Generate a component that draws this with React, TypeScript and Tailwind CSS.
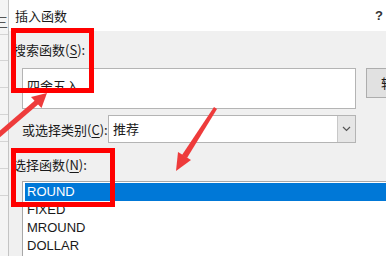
import React from "react";

const cjk = "font-['Noto_Sans_CJK_SC','Microsoft_YaHei',sans-serif]";
const latin = "font-['Liberation_Sans',Arial,sans-serif]";

const functions = ["ROUND", "FIXED", "MROUND", "DOLLAR", "TEXT"];

const Arrows: React.FC = () => (
  <svg
    className="pointer-events-none absolute inset-0"
    width={386}
    height={256}
    viewBox="0 0 386 256"
  >
    {/* arrow towards the search box */}
    <line x1={-6} y1={139} x2={37} y2={102} stroke="#ee3b3b" strokeWidth={5} />
    <polygon points="47,93 41.5,108 31,97" fill="#ee3b3b" />
    {/* arrow towards the function list */}
    <polygon points="214,107 217,109 187,158 182,155" fill="#ee3b3b" />
    <polygon points="176,171 191,160 178,152" fill="#ee3b3b" />
  </svg>
);

const Label: React.FC<{ text: string; hot: string }> = ({ text, hot }) => (
  <span className={`${cjk} text-[13px] leading-[16px] text-[#1a1a1a] whitespace-nowrap`}>
    {text}(<span className="underline underline-offset-2">{hot}</span>):
  </span>
);

export default function App() {
  return (
    <div className="relative flex h-[256px] w-[386px] overflow-hidden bg-[#f0f0f0]">
      {/* sheet behind the dialog */}
      <div className="flex w-[9px] shrink-0 flex-col border-r border-[#c4c4c4] bg-[#f4f4f4]">
        <div className={`${cjk} -ml-[5px] mt-[14px] h-[20px] text-[13px] leading-[16px] text-[#555]`}>三</div>
        <div className="h-[26px] border-t border-[#d4d4d4]" />
        <div className="h-[27px] border-t border-[#d4d4d4]" />
        <div className="h-[27px] border-t border-[#d4d4d4]" />
        <div className="h-[27px] border-t border-[#d4d4d4]" />
        <div className="h-[27px] border-t border-[#d4d4d4]" />
        <div className="h-[27px] border-t border-[#d4d4d4]" />
        <div className="h-[27px] border-t border-[#d4d4d4]" />
      </div>

      {/* dialog */}
      <div className="flex min-w-0 flex-1 flex-col">
        <div className="flex h-[31px] shrink-0 items-center justify-between bg-white pl-[6px] pr-[3px]">
          <span className={`${cjk} text-[13px] leading-[16px] text-[#1a1a1a]`}>插入函数</span>
          <span className={`${latin} text-[13px] font-bold text-[#333]`}>?</span>
        </div>

        <div className="flex flex-1 flex-col pl-[4px]">
          <div className="mt-[11px] flex h-[16px]">
            <Label text="搜索函数" hot="S" />
          </div>

          <div className="mt-[10px] flex items-start">
            <div className="ml-[9px] h-[41px] w-[334px] shrink-0 border border-[#b4b4b4] bg-white pl-[4px] pt-[4px]">
              <span className={`${cjk} text-[13px] leading-[16px] text-[#1a1a1a]`}>四舍五入</span>
            </div>
            <div className="ml-[10px] flex h-[30px] w-[80px] shrink-0 items-center border border-[#adadad] bg-[#e1e1e1] pl-[14px]">
              <span className={`${cjk} text-[13px] leading-[16px] text-[#1a1a1a] whitespace-nowrap`}>转到(G)</span>
            </div>
          </div>

          <div className="mt-[6px] flex items-center">
            <div className="ml-[9px] w-[86px] shrink-0">
              <Label text="或选择类别" hot="C" />
            </div>
            <div className="flex h-[28px] w-[248px] shrink-0 items-center border border-[#b4b4b4] bg-white">
              <span className={`${cjk} flex-1 pl-[4px] text-[13px] leading-[16px] text-[#1a1a1a]`}>推荐</span>
              <div className="flex h-full w-[18px] items-center justify-center border-l border-[#c8c8c8] bg-[#e6e6e6]">
                <svg width={9} height={6} viewBox="0 0 9 6">
                  <path d="M1 1l3.5 3.5L8 1" fill="none" stroke="#555" strokeWidth={1.2} />
                </svg>
              </div>
            </div>
          </div>

          <div className="mt-[14px] flex h-[16px]">
            <Label text="选择函数" hot="N" />
          </div>

          <div className="ml-[9px] mt-[8px] flex-1 border-l border-t border-[#a8a8a8] bg-white pl-[2px] pt-[1px]">
            {functions.map((f, i) => (
              <div
                key={f}
                className={`${latin} flex h-[18px] items-center pl-[2px] text-[13px] ${
                  i === 0 ? "bg-[#0078d7] text-white" : "text-[#1a1a1a]"
                }`}
              >
                {f}
              </div>
            ))}
          </div>
        </div>
      </div>

      {/* annotation boxes */}
      <div className="pointer-events-none absolute left-[11px] top-[28px] h-[65px] w-[83px] border-[5px] border-[#ff0000]" />
      <div className="pointer-events-none absolute left-[11px] top-[148px] h-[59px] w-[104px] border-[5px] border-[#ff0000]" />
      <Arrows />
    </div>
  );
}
